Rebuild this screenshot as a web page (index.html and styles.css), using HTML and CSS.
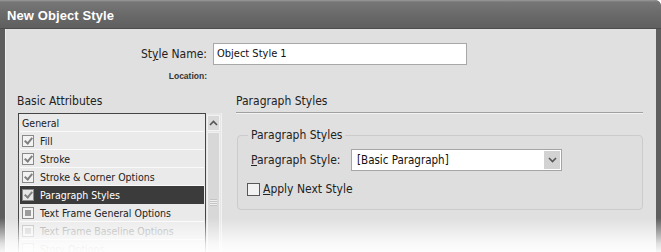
FILE: index.html
```html
<!DOCTYPE html>
<html lang="en">
<head>
<meta charset="UTF-8" />
<title>New Object Style</title>
<link rel="stylesheet" href="styles.css">
</head>
<body>

<div class="window">
  <div class="titlebar">New Object Style</div>

  <div class="dialog">
    <div class="name-form">
      <label class="field-label">St<u>y</u>le Name:</label>
      <div class="text-input">Object Style 1</div>
      <span class="location">Location:</span>
      <span></span>
    </div>

    <div class="columns">
      <div class="attrs">
        <div class="attrs-title">Basic Attributes</div>
        <div class="listbox">
          <div class="list">
            <div class="row">General</div>
            <div class="row"><span class="check on"></span>Fill</div>
            <div class="row"><span class="check on"></span>Stroke</div>
            <div class="row"><span class="check on"></span>Stroke &amp; Corner Options</div>
            <div class="row selected"><span class="check on"></span>Paragraph Styles</div>
            <div class="row"><span class="check mixed"></span>Text Frame General Options</div>
            <div class="row dim"><span class="check mixed"></span>Text Frame Baseline Options</div>
            <div class="row dim"><span class="check"></span>Story Options</div>
          </div>
          <div class="scrollbar">
            <div class="scroll-btn">
              <svg width="9" height="6" viewBox="0 0 9 6"><path d="M1 5 L4.5 1.5 L8 5" fill="none" stroke="#555" stroke-width="1.6"/></svg>
            </div>
            <div class="scroll-track">
              <span class="grip"></span>
            </div>
          </div>
        </div>
      </div>

      <div class="panel">
        <div class="panel-title">Paragraph Styles</div>
        <fieldset class="group">
          <legend>Paragraph Styles</legend>
          <div class="group-row">
            <span class="group-label"><u>P</u>aragraph Style:</span>
            <div class="select">
              <span>[Basic Paragraph]</span>
              <span class="select-btn">
                <svg width="9" height="6" viewBox="0 0 9 6"><path d="M1 1 L4.5 4.5 L8 1" fill="none" stroke="#555" stroke-width="1.6"/></svg>
              </span>
            </div>
          </div>
          <div class="group-check">
            <span class="box"></span><span><u>A</u>pply Next Style</span>
          </div>
        </fieldset>
      </div>
    </div>
  </div>

  <div class="fade"></div>
</div>

</body>
</html>
```

FILE: styles.css
```css
* {
  margin: 0; padding: 0; box-sizing: border-box;
}
body {
  width: 661px;
  height: 252px;
  overflow: hidden;
  background: #fff;
  font-family: "DejaVu Sans Condensed", "Liberation Sans", sans-serif;
  font-size: 12px;
  color: #222;
}
u {
  text-decoration: underline;
  text-underline-offset: 1px;
}
.window {
  position: relative;
  width: 661px;
  height: 252px;
  background: #5e5e5e;
  border-radius: 0 6px 0 0;
  padding: 0 5px;
  overflow: hidden;
}
.titlebar {
  height: 29px;
  margin: 0 -5px;
  padding: 8px 0 0 7px;
  line-height: 15px;
  background: linear-gradient(#9a9a9a 0, #777 2px, #6a6a6a 50%, #5f5f5f);
  border-radius: 0 6px 0 0;
  color: #fff;
  font-family: "Liberation Sans", Arial, sans-serif;
  font-size: 13px;
  font-weight: bold;
  letter-spacing: 0.1px;
  border-bottom: 1px solid #4c4c4c;
}
.dialog {
  height: 223px;
  background: #e0e0e0;
  border-left: 1px solid #efefef;
}

/* name + location */
.name-form {
  display: grid;
  grid-template-columns: 201px 254px;
  column-gap: 6px;
  row-gap: 5px;
  align-items: center;
  padding-top: 14px;
}
.field-label {
  text-align: right;
  font-size: 12px;
  color: #222;
}
.text-input {
  height: 22px;
  line-height: 20px;
  background: #fff;
  border: 1px solid #a8a8a8;
  padding: 0 3px;
  font-size: 11px;
  color: #111;
}
.location {
  line-height: 12px;
  text-align: right;
  font-family: "Liberation Sans", Arial, sans-serif;
  font-size: 8.5px;
  font-weight: bold;
  color: #333;
}

/* two columns */
.columns {
  display: flex;
  gap: 14px;
  padding: 11px 0 0 11px;
}
.attrs {
  width: 205px;
}
.attrs-title {
  height: 20px;
  line-height: 16px;
  font-size: 12px;
  color: #222;
}
.listbox {
  display: flex;
  height: 140px;
  margin-left: 1px;
}
.list {
  width: 188px;
  border: 1px solid #454545;
  border-bottom: none;
  background: #eaeaea;
  padding: 0 1px;
  overflow: hidden;
}
.row {
  height: 18px;
  display: flex;
  align-items: center;
  gap: 6px;
  padding-left: 2px;
  border-bottom: 1px solid #fafafa;
  font-size: 10.5px;
  color: #222;
  white-space: nowrap;
}
.row.selected {
  background: #3b3b3b;
  color: #fff;
  border-bottom-color: #3b3b3b;
}
.row.dim {
  color: #a6a6a6;
}
.check {
  width: 12px;
  height: 12px;
  border: 1px solid #8a8a8a;
  background: #f3f3f3;
  position: relative;
  flex: none;
}
.check.on::after {
  content: "";
  position: absolute;
  left: 3px;
  top: 0;
  width: 3px;
  height: 6px;
  border: solid #808080;
  border-width: 0 2px 2px 0;
  transform: rotate(40deg);
}
.check.mixed::after {
  content: "";
  position: absolute;
  left: 2px;
  top: 2px;
  width: 6px;
  height: 6px;
  background: #9c9c9c;
}
.row.dim .check {
  border-color: #bdbdbd;
}
.row.dim .check.mixed::after {
  background: #d2d2d2;
}
.row.selected .check {
  background: #e6e6e6;
}
.scrollbar {
  width: 16px;
  display: flex;
  flex-direction: column;
  background: #e6e6e6;
  border-right: 1px solid #f2f2f2;
  padding-top: 2px;
}
.scroll-btn {
  height: 16px;
  display: flex;
  align-items: center;
  justify-content: center;
  background: #dadada;
  border: 1px solid #f3f3f3;
  margin: 0 1px;
}
.scroll-track {
  flex: 1;
  margin: 1px 1px 0;
  background: #d8d8d8;
  border: 1px solid #f0f0f0;
  border-bottom: none;
  display: flex;
  justify-content: center;
  padding-top: 66px;
}
.grip {
  width: 7px;
  height: 7px;
  background: repeating-linear-gradient(#c4c4c4 0 1px, #efefef 1px 2px);
}

/* right panel */
.panel {
  width: 407px;
}
.panel-title {
  height: 20px;
  line-height: 16px;
  font-size: 12px;
  border-bottom: 1px solid #a0a0a0;
  box-shadow: 0 1px 0 #f3f3f3;
}
.group {
  margin-top: 15px;
  margin-left: 1px;
  height: 82px;
  border: 1px solid #cbcbcb;
  border-radius: 4px;
  padding: 0 0 0 13px;
  background: #dedede;
}
.group legend {
  padding: 0 3px;
  margin-left: -3px;
  line-height: 14px;
  font-size: 12px;
  color: #222;
}
.group-row {
  display: flex;
  align-items: center;
  margin-top: 7px;
}
.group-label {
  width: 100px;
  white-space: nowrap;
  font-size: 12px;
}
.select {
  width: 211px;
  height: 22px;
  background: #fff;
  border: 1px solid #a5a5a5;
  display: flex;
  align-items: center;
  justify-content: space-between;
  padding-left: 5px;
  font-size: 11.5px;
  color: #111;
}
.select-btn {
  width: 16px;
  height: 18px;
  margin-right: 1px;
  background: #d2d2d2;
  display: flex;
  align-items: center;
  justify-content: center;
}
.group-check {
  display: flex;
  align-items: center;
  gap: 3px;
  margin-top: 11px;
  margin-left: -4px;
  font-size: 12px;
}
.box {
  width: 13px;
  height: 13px;
  border: 1px solid #585858;
  background: #f2f2f2;
}

/* photo fade at the bottom edge */
.fade {
  position: absolute;
  left: 0;
  right: 0;
  bottom: 0;
  height: 34px;
  background: linear-gradient(rgba(255,255,255,0), rgba(255,255,255,0.8) 75%, rgba(255,255,255,0.95));
}
```
